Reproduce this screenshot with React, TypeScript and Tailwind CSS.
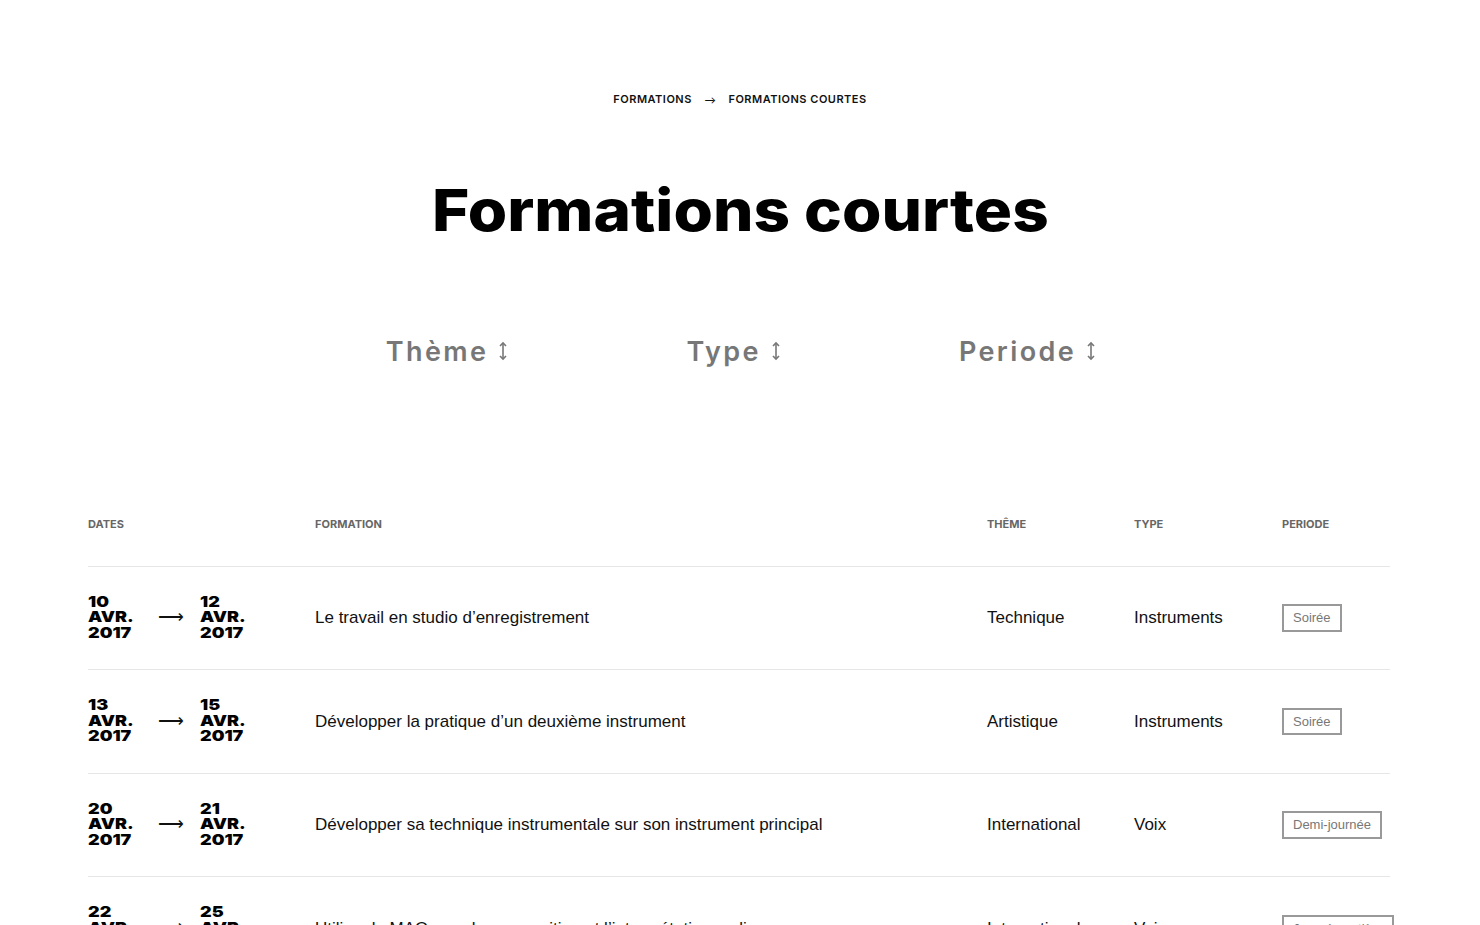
const wide = { fontFamily: 'Inter, "Liberation Sans", sans-serif' };
const body = { fontFamily: '"Liberation Sans", Arial, sans-serif' };

type Row = {
  from: [string, string, string];
  to: [string, string, string];
  title: string;
  theme: string;
  type: string;
  period: string;
};

const rows: Row[] = [
  { from: ['10', 'AVR.', '2017'], to: ['12', 'AVR.', '2017'], title: 'Le travail en studio d’enregistrement', theme: 'Technique', type: 'Instruments', period: 'Soirée' },
  { from: ['13', 'AVR.', '2017'], to: ['15', 'AVR.', '2017'], title: 'Développer la pratique d’un deuxième instrument', theme: 'Artistique', type: 'Instruments', period: 'Soirée' },
  { from: ['20', 'AVR.', '2017'], to: ['21', 'AVR.', '2017'], title: 'Développer sa technique instrumentale sur son instrument principal', theme: 'International', type: 'Voix', period: 'Demi-journée' },
  { from: ['22', 'AVR.', '2017'], to: ['25', 'AVR.', '2017'], title: 'Utiliser la MAO pour la composition et l’interprétation en live', theme: 'International', type: 'Voix', period: 'Journée entière' },
];

function DateBlock({ d }: { d: [string, string, string] }) {
  return (
    <div className="w-[46px] text-[15px] font-black leading-[15.5px] text-black" style={wide}>
      {d.map((l) => (
        <div key={l} className="origin-left scale-x-[1.2] whitespace-nowrap">{l}</div>
      ))}
    </div>
  );
}

function SortIcon() {
  return (
    <svg width="10" height="20" viewBox="0 0 10 20" fill="none" stroke="currentColor" strokeWidth="1.6">
      <path d="M5 2v16" />
      <path d="M2 5l3-3 3 3" strokeLinejoin="miter" />
      <path d="M2 15l3 3 3-3" strokeLinejoin="miter" />
    </svg>
  );
}

function Filter({ label }: { label: string }) {
  return (
    <button type="button" className="flex items-center gap-[10px] text-[#777]">
      <span className="text-[27px] font-semibold leading-none tracking-[2.4px]" style={wide}>{label}</span>
      <SortIcon />
    </button>
  );
}

export default function App() {
  return (
    <div className="min-h-screen bg-white text-black" style={body}>
      <nav className="flex items-center justify-center gap-[12px] pt-[91px] text-[11px] font-semibold tracking-[0.5px] text-[#111]" style={wide}>
        <span>FORMATIONS</span>
        <span className="text-[9px]">⟶</span>
        <span>FORMATIONS COURTES</span>
      </nav>

      <h1 className="mt-[70px] text-center text-[58px] font-extrabold leading-[64px]" style={wide}>
        <span className="inline-block scale-x-[1.1]">Formations courtes</span>
      </h1>

      <div className="mt-[96px] flex items-center justify-center gap-[178px] pl-[2px]">
        <Filter label="Thème" />
        <Filter label="Type" />
        <Filter label="Periode" />
      </div>

      <div className="ml-[88px] mr-[90px] mt-[151px]">
        <div className="grid grid-cols-[227px_672px_147px_148px_1fr] border-b border-[#e6e6e6] pb-[34px] text-[11px] font-bold text-[#666]" style={wide}>
          <div>DATES</div>
          <div>FORMATION</div>
          <div>THÊME</div>
          <div>TYPE</div>
          <div>PERIODE</div>
        </div>
        {rows.map((r) => (
          <div key={r.title} className="grid h-[103.4px] grid-cols-[227px_672px_147px_148px_1fr] items-center border-b border-[#e6e6e6] text-[17px] text-[#111]">
            <div className="flex items-center pb-[2px]">
              <DateBlock d={r.from} />
              <span className="ml-[24px] mr-[16px] text-[18px] leading-none">⟶</span>
              <DateBlock d={r.to} />
            </div>
            <div>{r.title}</div>
            <div>{r.theme}</div>
            <div>{r.type}</div>
            <div>
              <span className="inline-block whitespace-nowrap border-2 border-[#999] px-[9px] py-[2px] text-[13px] text-[#777]">{r.period}</span>
            </div>
          </div>
        ))}
      </div>
    </div>
  );
}
